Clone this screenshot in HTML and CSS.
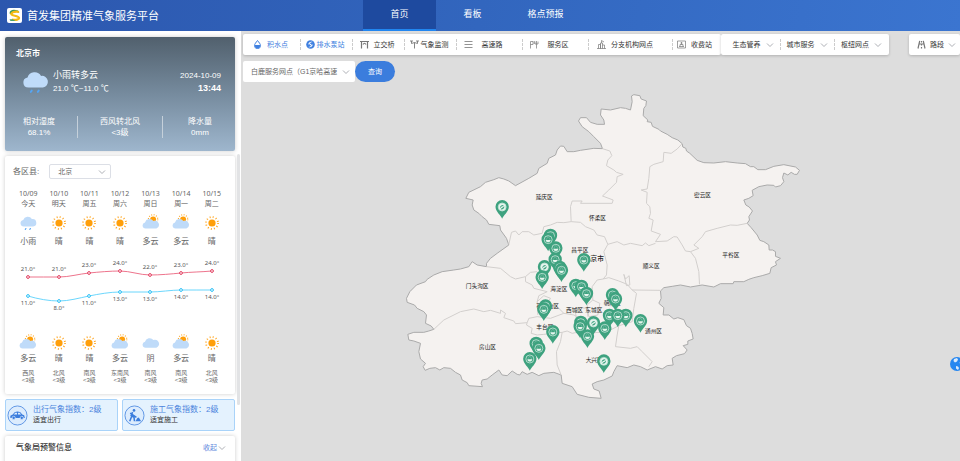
FILE: index.html
```html
<!DOCTYPE html>
<html lang="zh-CN">
<head>
<meta charset="utf-8">
<title>首发集团精准气象服务平台</title>
<link rel="stylesheet" href="styles.css">
</head>
<body>
<svg class="sprite" aria-hidden="true">
  <symbol id="rain" viewBox="0 0 30 30"><path d="M8 21a5.500 5.500 0 0 1-1-10.900A8 8 0 0 1 21.500 8.500a6.300 6.300 0 0 1 2 12.500z" fill="#bfdbf9"/><path d="M11.500 24.200l-1 1.400M19 24.200l-1 1.400" stroke="#55a5f3" stroke-width="2" stroke-linecap="round"/></symbol>
  <symbol id="sun" viewBox="0 0 30 30"><circle cx="15" cy="15" r="6" fill="#ff9f0a"/><circle cx="15" cy="15" r="10" fill="none" stroke="#ffa41c" stroke-width="3" stroke-dasharray="1.600 3.636"/></symbol>
  <symbol id="cloudy" viewBox="0 0 30 30"><circle cx="18.500" cy="9" r="5" fill="#ff9f0a"/><circle cx="18.500" cy="9" r="7.800" fill="none" stroke="#ffa41c" stroke-width="2" stroke-dasharray="1.500 2.584"/><path d="M6 24a5 5 0 0 1-1-9.900A8 8 0 0 1 19 11.500a6.500 6.500 0 0 1 5 12.500z" fill="#bfdbf9"/></symbol>
  <symbol id="overcast" viewBox="0 0 30 30"><path d="M6 23a5 5 0 0 1-1-9.900A8 8 0 0 1 19 10a6.500 6.500 0 0 1 5 13z" fill="#bfdbf9"/></symbol>
  <symbol id="down" viewBox="0 0 8 8"><path d="M1 2.500l3 3 3-3" fill="none" stroke="currentColor" stroke-width=".9"/></symbol>
</svg>

<header class="header">
  <div class="brand">
    <svg class="logo" viewBox="0 0 15 15"><rect width="15" height="15" rx="2" fill="#fff"/><path d="M2.500 5.500C2.500 2 6 1 11 2.500L12.500 5C9 3 6 4.500 4.500 6.500z" fill="#3a9d61"/><path d="M12 4C7 3 3.500 5 4.500 6.500c1 1.500 7 1 7.500 3.300.3 1.600-3 2.700-7 1.800" fill="none" stroke="#f5ba12" stroke-width="2.200"/><path d="M2.500 11.500c2-.6 4-.3 6 1.500H3.500z" fill="#4ba36a"/></svg>
    <span>首发集团精准气象服务平台</span>
  </div>
  <nav class="nav">
    <a class="active" href="#home">首页</a>
    <a href="#board">看板</a>
    <a href="#grid">格点预报</a>
  </nav>
</header>

<div class="body">
  <aside class="side">
    <section class="card now">
      <h1>北京市</h1>
      <div class="now-main">
        <svg class="now-icon"><use href="#rain"/></svg>
        <div class="now-text"><b>小雨转多云</b><span>21.0 ℃~11.0 ℃</span></div>
        <div class="now-time"><span>2024-10-09</span><strong>13:44</strong></div>
      </div>
      <dl class="stats">
        <div><dt>相对湿度</dt><dd>68.1%</dd></div>
        <div><dt>西风转北风</dt><dd>&lt;3级</dd></div>
        <div><dt>降水量</dt><dd>0mm</dd></div>
      </dl>
    </section>

    <section class="card forecast">
      <div class="district">
        <label for="district">各区县:</label>
        <div class="pick">
          <select id="district"><option>北京</option></select>
          <svg class="chev"><use href="#down"/></svg>
        </div>
      </div>
      <div class="days">
        <div><span>10/09</span><span>今天</span><svg><use href="#rain"/></svg><em>小雨</em></div>
        <div><span>10/10</span><span>明天</span><svg><use href="#sun"/></svg><em>晴</em></div>
        <div><span>10/11</span><span>周五</span><svg><use href="#sun"/></svg><em>晴</em></div>
        <div><span>10/12</span><span>周六</span><svg><use href="#sun"/></svg><em>晴</em></div>
        <div><span>10/13</span><span>周日</span><svg><use href="#cloudy"/></svg><em>多云</em></div>
        <div><span>10/14</span><span>周一</span><svg><use href="#cloudy"/></svg><em>多云</em></div>
        <div><span>10/15</span><span>周二</span><svg><use href="#sun"/></svg><em>晴</em></div>
      </div>
      <svg class="chart" viewBox="0 0 214 87">
        <g fill="none" stroke-width=".8">
          <path stroke="#e8506e" d="M15 31C25 31 36 31 46 31S66 28 76 27 97 25 107 25 127 29 137 29 158 28 168 27 188 26 199 25"/>
          <path stroke="#45ccfb" d="M15 50C25 53 36 55 46 55S66 52 76 50 97 46 107 46 127 46 137 46 158 44 168 44 188 44 199 44"/>
        </g>
        <g fill="#fff" stroke="#e23b5d" stroke-width="1"><circle cx="15" cy="31" r="1.400"/><circle cx="46" cy="31" r="1.400"/><circle cx="76" cy="27" r="1.400"/><circle cx="107" cy="25" r="1.400"/><circle cx="137" cy="29" r="1.400"/><circle cx="168" cy="27" r="1.400"/><circle cx="199" cy="25" r="1.400"/></g>
        <g fill="#fff" stroke="#28bff6" stroke-width="1"><circle cx="15" cy="50" r="1.400"/><circle cx="46" cy="55" r="1.400"/><circle cx="76" cy="50" r="1.400"/><circle cx="107" cy="46" r="1.400"/><circle cx="137" cy="46" r="1.400"/><circle cx="168" cy="44" r="1.400"/><circle cx="199" cy="44" r="1.400"/></g>
        <g class="temps">
          <text x="15" y="25">21.0°</text><text x="46" y="25">21.0°</text><text x="76" y="21">23.0°</text><text x="107" y="19">24.0°</text><text x="137" y="23">22.0°</text><text x="168" y="21">23.0°</text><text x="199" y="19">24.0°</text>
          <text x="15" y="59">11.0°</text><text x="46" y="64">8.0°</text><text x="76" y="59">11.0°</text><text x="107" y="55">13.0°</text><text x="137" y="55">13.0°</text><text x="168" y="53">14.0°</text><text x="199" y="53">14.0°</text>
        </g>
      </svg>
      <div class="days night">
        <div><svg><use href="#cloudy"/></svg><em>多云</em><small>西风</small><small>&lt;3级</small></div>
        <div><svg><use href="#sun"/></svg><em>晴</em><small>北风</small><small>&lt;3级</small></div>
        <div><svg><use href="#sun"/></svg><em>晴</em><small>南风</small><small>&lt;3级</small></div>
        <div><svg><use href="#cloudy"/></svg><em>多云</em><small>东南风</small><small>&lt;3级</small></div>
        <div><svg><use href="#overcast"/></svg><em>阴</em><small>南风</small><small>&lt;3级</small></div>
        <div><svg><use href="#cloudy"/></svg><em>多云</em><small>南风</small><small>&lt;3级</small></div>
        <div><svg><use href="#sun"/></svg><em>晴</em><small>北风</small><small>&lt;3级</small></div>
      </div>
    </section>

    <div class="indexes">
      <section>
        <svg viewBox="0 0 22 22"><circle cx="11" cy="11" r="10" fill="#dcecfd" stroke="#5c94e4"/><path d="M3.500 13.500v-2.300l2.500-1.200 2-2.500q3-1.500 6 0l2 2.500 2 .8.700 2.700z" fill="#3b7ddd"/><path d="M7 10l1.700-1.900h1.800V10zM11.500 8.100h1.700L14.800 10h-3.300z" fill="#dcecfd"/><circle cx="7" cy="13.500" r="1.700" fill="#3b7ddd" stroke="#dcecfd" stroke-width=".7"/><circle cx="15.500" cy="13.500" r="1.700" fill="#3b7ddd" stroke="#dcecfd" stroke-width=".7"/></svg>
        <div><b>出行气象指数：2级</b><span>适宜出行</span></div>
      </section>
      <section>
        <svg viewBox="0 0 22 22"><circle cx="11" cy="11" r="10" fill="#dcecfd" stroke="#5c94e4"/><circle cx="10.500" cy="5.700" r="1.400" fill="#3b7ddd"/><path d="M9 7.500L7.500 11l3 2 .5 4M8 12l-2 5M6.500 8.500L13 13" fill="none" stroke="#3b7ddd" stroke-width="1.600"/><path d="M12 17l2-3.500 1.500-.5L18 17z" fill="#3b7ddd"/></svg>
        <div><b>施工气象指数：2级</b><span>适宜施工</span></div>
      </section>
    </div>

    <section class="card alerts">
      <h2>气象局预警信息</h2>
      <button type="button">收起<svg class="chev"><use href="#down"/></svg></button>
    </section>
    <div class="scroll"></div>
  </aside>

  <main class="main">
    <svg class="map" viewBox="0 0 720 430" preserveAspectRatio="xMidYMin slice">
      <defs>
        <g id="pin"><path d="M0 35C-3 25-20 14-20-1A20 20 0 0 1 20-1C20 14 3 25 0 35z" fill="#3ea27f"/><circle r="12" fill="none" stroke="#e5f5ee" stroke-width="2"/></g>
        <g id="drop"><use href="#pin"/><path d="M0-9C3-5 6-1 6 2A6 6 0 0 1-6 2C-6-1-3-5 0-9z" fill="#3ea27f" stroke="#b9decf" stroke-width="1"/><path d="M-7 1H7C7 10-7 10-7 1z" fill="#e5f5ee"/></g>
        <g id="pump"><use href="#pin"/><circle r="11" fill="#e5f5ee"/><path d="M-6 4C-8-3-2-7 5-6L1-2-3-1zM6-3C8 4 2 8-5 7L-1 3 3 1z" fill="#3ea27f"/></g>
      </defs>
      <g transform="translate(160 54) scale(.33333)">
        <path class="land" d="M700 29L718 32 722 42 738 48 736 62 730 70 728 92 742 105 740 110 752 112 756 124 775 133 780 138 800 148 815 158 832 165 845 176 847 186 856 190 858 198 868 205 890 226 910 233 940 234 975 230 1010 234 1035 236 1050 245 1060 245 1072 254 1095 254 1120 244 1150 239 1185 246 1197 256 1190 268 1182 268 1172 262 1162 270 1150 264 1146 278 1150 290 1140 302 1125 306 1120 301 1100 300 1075 305 1055 316 1058 332 1045 340 1030 345 1036 360 1046 366 1056 378 1045 395 1047 405 1040 415 1052 428 1070 450 1078 466 1090 470 1105 480 1106 495 1116 495 1125 500 1125 514 1140 520 1125 530 1128 540 1112 548 1108 565 1085 572 1060 578 1045 583 1030 590 1000 590 998 596 960 596 940 606 905 600 870 606 840 600 815 604 790 608 780 618 782 640 775 655 790 668 788 690 805 690 820 702 832 698 850 704 858 722 870 730 875 745 878 762 862 768 862 778 848 782 860 795 852 806 828 812 815 820 818 840 800 842 785 852 765 845 740 855 720 845 700 840 680 848 650 842 640 860 635 873 610 885 590 890 575 897 580 912 596 918 602 940 565 937 530 928 515 905 485 895 482 870 460 862 430 865 415 872 395 862 380 868 365 860 358 870 350 868 335 858 320 872 305 870 295 855 275 870 260 882 245 885 242 895 246 905 205 902 200 893 185 885 180 870 165 862 150 850 130 848 118 855 105 848 88 850 74 856 68 845 75 835 60 822 55 800 60 775 40 768 25 765 22 748 40 742 70 742 85 738 100 733 92 723 75 715 78 690 70 680 50 670 42 660 20 652 18 640 28 620 48 600 75 590 80 583 100 570 125 560 160 555 180 552 205 545 215 530 230 540 258 545 258 535 270 520 290 505 325 480 318 460 300 435 298 422 265 418 258 405 245 395 235 385 220 375 215 360 218 345 196 340 205 322 240 305 255 292 280 284 295 278 310 282 325 288 345 302 385 280 410 265 415 250 440 235 445 220 465 210 470 195 480 183 490 184 500 200 520 200 540 196 580 190 606 191 600 175 580 155 565 140 545 125 534 108 540 98 558 98 570 112 590 118 612 118 610 105 600 90 602 72 630 75 660 68 675 70 690 75 695 50 693 33z"/>
        <path class="border" d="M606 191L628 198 634 212 622 225 618 242 640 255 648 262 668 268 650 275 648 292 625 315 606 333 638 345 635 355 540 355 545 348 515 348 510 365 512 410 490 413 470 412 450 420 430 425 425 445 400 450 385 440 365 440 355 450 345 438 333 442 325 478M512 410L540 412 555 425 580 435 590 450 612 455 622 478 610 500 620 540 618 570 608 582M622 478L650 470 670 480 690 475 725 482 735 474 745 482 765 475M845 176L830 192 812 205 790 202 788 230 760 238 748 245 745 280 740 312 722 315 740 322 738 355 748 365 750 385 745 400 758 405 752 438 780 448 765 470 800 468 820 455 830 456 845 480 855 498 870 500 895 490 880 480 905 455 915 440 950 430 990 420 1010 421 1040 415M870 500L885 520 895 560 897 598M608 582L625 578 655 588 680 598 695 615 780 616M670 568L675 582 686 572 688 600 678 602 670 568M695 615L708 625 700 670 695 710 680 715 655 722 650 750 645 785 690 790 710 785 725 800 755 830 745 845M608 582L590 585 575 605 577 645 598 655 592 690 565 695 560 670 540 668 525 680 528 710M577 645L560 660 562 695M258 545L300 550 330 575 345 582 375 575 390 562 410 560M375 575L375 590 395 600 400 610 440 620 415 632 410 650 430 632 450 640 440 655 450 660 470 665 490 685M100 733L130 705 180 680 220 672 250 680 270 676 300 685 300 675 315 685 310 698 340 708 345 716 380 713 385 700 410 695 450 700 490 685 520 690 540 700M380 713L378 720 395 730 392 745 410 750 430 748 485 742 480 770 468 800 470 840 482 870M485 742L500 738 515 745 540 740 560 745 620 740 655 722M410 650L412 690"/>
        <g class="places">
          <text x="431" y="343">延庆区</text><text x="591" y="404">怀柔区</text><text x="906" y="335">密云区</text><text x="538" y="500">昌平区</text><text x="991" y="515">平谷区</text><text x="752" y="548">顺义区</text><text x="230" y="609">门头沟区</text><text x="475" y="617">海淀区</text><text x="441" y="670">石景山区</text><text x="522" y="682">西城区</text><text x="580" y="682">东城区</text><text x="635" y="660">朝阳区</text><text x="433" y="731">丰台区</text><text x="261" y="792">房山区</text><text x="759" y="745">通州区</text><text x="581" y="832">大兴区</text>
          <text class="city" x="580" y="528">北京市</text>
        </g>
        <use href="#pump" x="305" y="366"/><use href="#drop" x="450" y="452"/><use href="#drop" x="443" y="464"/><use href="#drop" x="466" y="490"/><use href="#drop" x="464" y="524"/><use href="#drop" x="478" y="548"/><use href="#drop" x="483" y="556"/><use href="#pump" x="432" y="546"/><use href="#drop" x="425" y="577"/><use href="#drop" x="550" y="525"/><use href="#drop" x="526" y="602"/><use href="#drop" x="543" y="605"/><use href="#drop" x="558" y="626"/><use href="#drop" x="636" y="630"/><use href="#drop" x="645" y="642"/><use href="#pump" x="435" y="664"/><use href="#drop" x="430" y="673"/><use href="#drop" x="457" y="741"/><use href="#drop" x="407" y="776"/><use href="#drop" x="415" y="790"/><use href="#drop" x="388" y="822"/><use href="#drop" x="541" y="713"/><use href="#drop" x="539" y="725"/><use href="#pump" x="579" y="714"/><use href="#drop" x="561" y="754"/><use href="#drop" x="613" y="730"/><use href="#drop" x="627" y="692"/><use href="#drop" x="676" y="692"/><use href="#drop" x="652" y="692"/><use href="#drop" x="720" y="708"/><use href="#pump" x="610" y="829"/>
      </g>
    </svg>

    <div class="toolbar">
      <div class="group layers">
        <button type="button" class="on"><svg viewBox="0 0 9 9"><path d="M4.500.5C6 2.500 7.500 4 7.500 5.600a3 3 0 0 1-6 0C1.500 4 3 2.500 4.500.5z" fill="none" stroke="currentColor"/><path d="M1.800 5h5.400c.2 4.500-5.600 4.500-5.400 0z" fill="currentColor"/></svg>积水点</button>
        <button type="button" class="on tight"><svg viewBox="0 0 9 9"><circle cx="4.500" cy="4.500" r="4.300" fill="currentColor"/><path d="M6.800 2C4.500 1.200 2.600 2 2.300 4.500L3.500 4.200C3.800 3 4.800 2.300 6.800 2zM2.200 7c2.300.8 4.200 0 4.500-2.500l-1.200.3C5.200 6 4.200 6.700 2.200 7z" fill="#fff"/><circle cx="4.500" cy="4.500" r=".8" fill="#fff"/></svg>排水泵站</button>
        <button type="button"><svg viewBox="0 0 9 9"><path d="M0 1.500h9M1.500 1.500v7M7.500 1.500v7M3 4.500Q4.500 2 6 4.500" fill="none" stroke="currentColor" stroke-width="1.200"/></svg>立交桥</button>
        <button type="button" class="tight"><svg viewBox="0 0 9 9"><path d="M0 1h3M1.500 1v2.500l3-1 3 1V1M6 1h3M4.500 2.500v6" fill="none" stroke="currentColor" stroke-width=".9"/></svg>气象监测</button>
        <button type="button" class="wide"><svg viewBox="0 0 9 9"><path d="M.5 1.500h8M.5 4.500h8M.5 7.500h8" stroke="currentColor" stroke-width=".8"/></svg>高速路</button>
        <button type="button" class="wide"><svg viewBox="0 0 9 9"><path d="M.5 8.500v-7H3v3H.5M5 1.500v2.500h3V1.500M6.500 1v7.500M4.200 1v3" fill="none" stroke="currentColor" stroke-width=".7"/></svg>服务区</button>
        <button type="button" class="widest"><svg viewBox="0 0 9 9"><path d="M0 8.500h9M1.500 8.500v-4h2v4M3.500 8.500V3h2v5.500M5.500 5h2v3.500M4.500 3V.5L7 2" fill="none" stroke="currentColor" stroke-width=".7"/></svg>分支机构网点</button>
        <button type="button"><svg viewBox="0 0 9 9"><path d="M.5 1h8v7h-8zM2 6.500h5M3 6.500V4.500h3v2M4.500 2v2.500M3.500 3h2" fill="none" stroke="currentColor" stroke-width=".7"/></svg>收费站</button>
      </div>
      <div class="group menus">
        <button type="button">生态管养<svg class="chev"><use href="#down"/></svg></button>
        <button type="button">城市服务<svg class="chev"><use href="#down"/></svg></button>
        <button type="button">枢纽网点<svg class="chev"><use href="#down"/></svg></button>
      </div>
      <div class="group road">
        <button type="button"><svg viewBox="0 0 9 9"><path d="M2.700.8L1 8.500M6.300.8L8 8.500M4.500 1v1.500M4.500 4v1.500M4.500 7v1.500M2 4h5" fill="none" stroke="currentColor" stroke-width="1.200"/></svg>路段<svg class="chev"><use href="#down"/></svg></button>
      </div>
    </div>

    <form class="search">
      <div class="pick">
        <select aria-label="服务网点"><option>白鹿服务网点（G1京哈高速</option></select>
        <svg class="chev"><use href="#down"/></svg>
      </div>
      <button type="button">查询</button>
    </form>

    <button class="globe" type="button" aria-label="地图">
      <svg viewBox="0 0 14 14"><circle cx="7" cy="7" r="7" fill="#2687f0"/><path d="M4 2l3-1 1 1.500-1 2-2 1L3.500 4zM9.500 5.500L12 4l1.500 3L11 9zM6 9l2 .5 1 1.500-1 2-2-1.500z" fill="#dceafb"/></svg>
    </button>
  </main>
</div>
</body>
</html>
```
FILE: styles.css
```css
* { box-sizing: border-box; margin: 0; padding: 0; }
html, body { height: 100%; }
body {
  display: flex;
  flex-direction: column;
  overflow: hidden;
  font: 8px/10px "Liberation Sans", "Noto Sans CJK SC", sans-serif;
  color: #333;
  background: #fff;
}
button, select { font: inherit; color: inherit; border: 0; background: none; }
svg { display: block; flex: none; }
em, dt { font-style: normal; }
.sprite { position: absolute; width: 0; height: 0; }
.chev { width: 8px; height: 8px; color: #a3a6ad; }

.header {
  display: flex;
  flex: none;
  height: 31px;
  color: #fff;
  background: linear-gradient(100deg, #2c57ae, #3266be 50%, #3b75d0);
}
.brand { display: flex; align-items: center; gap: 5px; width: 363px; padding-left: 7px; font-size: 11px; }
.logo { width: 15px; height: 15px; }
.nav { display: flex; }
.nav a {
  width: 73px;
  padding-top: 1px;
  color: #fff;
  font-size: 9px;
  line-height: 26px;
  text-align: center;
  text-decoration: none;
  border-bottom: 2px solid transparent;
}
.nav .active { background: #1e4a9f; border-color: #2186f0; }

.body { display: flex; flex: 1; min-height: 0; }
.side {
  position: relative;
  display: flex;
  flex-direction: column;
  flex: none;
  gap: 5px;
  width: 241px;
  padding: 6px 6px 0 5px;
  overflow: hidden;
}
.side > * { flex: none; }
.card { border-radius: 2px; background: #fff; box-shadow: 0 0 4px #0003; }
.scroll { position: absolute; top: 123px; right: 1px; width: 3px; height: 251px; background: #e2e3e5; border-radius: 2px; }

.now { padding: 11px 14px 13px 11px; color: #fff; background: linear-gradient(#51606d, #768b9e 50%, #9eb6cd); }
.now h1 { font-size: 8px; line-height: 12px; }
.now-main { display: flex; align-items: center; gap: 3px; margin-top: 8px; padding-left: 4px; line-height: 13px; }
.now-icon { width: 30px; height: 28px; }
.now-text, .now-time { display: flex; flex-direction: column; }
.now-text b { font-size: 9px; font-weight: 400; }
.now-time { margin-left: auto; text-align: right; }
.now-time strong { font-size: 9px; }
.stats { display: grid; grid-template-columns: 61px 1fr 59px; margin-top: 20px; text-align: center; line-height: 11px; }
.stats div:first-child { padding-right: 15px; }
.stats div:last-child { padding-left: 16px; }
.stats div + div { border-left: 1px solid #c5d0da; }

.forecast { padding: 8px 8px 10px; color: #666; }
.district { display: flex; align-items: center; gap: 10px; }
.pick { position: relative; }
.pick select { appearance: none; width: 100%; outline: 0; }
.pick .chev { position: absolute; right: 5px; top: 50%; margin-top: -4px; }
.district .pick { width: 62px; }
.district select { height: 15px; padding-left: 8px; font-size: 7px; border: 1px solid #dcdfe6; border-radius: 2px; }
.days { display: grid; grid-template-columns: repeat(7, 1fr); margin-top: 10px; text-align: center; font-family: "Noto Sans", "Noto Sans CJK SC", sans-serif; }
.days div { display: flex; flex-direction: column; align-items: center; }
.days span { font-size: 7px; }
.days svg { width: 18px; height: 20px; margin-top: 4px; }
.days em { margin-top: 3px; }
.chart { width: 100%; }
.temps { font: 6px "Noto Sans", sans-serif; fill: #555; text-anchor: middle; }
.days.night { margin-top: 0; }
.night svg, .night em { margin-top: 0; }
.night em { margin-bottom: 7px; }
.night small { font: 6px/7px "Liberation Sans", "Noto Sans CJK SC", sans-serif; white-space: nowrap; }

.indexes { display: grid; grid-template-columns: 1fr 1fr; gap: 4px; }
.indexes section { display: flex; align-items: center; gap: 5px; height: 32px; padding-left: 1px; border: 1px solid #a9d3f9; border-radius: 2px; background: #e4f2fe; white-space: nowrap; }
.indexes svg { width: 21px; height: 21px; }
.indexes div { display: flex; flex-direction: column; }
.indexes b { color: #4c84dd; font-weight: 400; }
.indexes span { font-size: 7px; }
.alerts { display: flex; justify-content: space-between; height: 40px; padding: 7px 9px 0 11px; }
.alerts h2 { font-size: 8px; font-weight: 500; line-height: 10px; }
.alerts button { display: flex; align-items: center; height: 10px; gap: 1px; color: #5b87dc; font-size: 7px; }

.main { position: relative; flex: 1; min-width: 0; overflow: hidden; padding: 3px 0 0 2px; background: #ddd; }
.map { position: absolute; inset: 0; width: 100%; height: 100%; }
.land { fill: #f5f2f0; stroke: #aaa; stroke-width: 3; stroke-linejoin: round; }
.border { fill: none; stroke: #d2cfcd; stroke-width: 3; stroke-linejoin: round; }
.places { font: 17px "Noto Sans CJK SC", sans-serif; fill: #222; text-anchor: middle; }
.places .city { font-size: 20px; font-weight: 500; }

.toolbar { position: relative; display: flex; height: 21px; font-size: 7px; }
.group { display: flex; background: #fff; border-radius: 2px; box-shadow: 0 1px 3px #0003; }
.group button { position: relative; display: flex; align-items: center; justify-content: center; gap: 5px; white-space: nowrap; }
.group button + button::before { content: ""; position: absolute; left: 0; top: 5px; bottom: 5px; border-left: 1px dashed #ccc; }
.group svg:not(.chev) { width: 9px; height: 9px; color: #777; }
.layers button { width: 52px; padding-right: 2px; }
.layers button:first-child { width: 57px; }
.layers .tight { gap: 2px; }
.layers .wide { width: 66px; gap: 9px; padding-right: 12px; }
.layers .widest { width: 84px; padding-right: 10px; }
.layers button:last-child { width: 49px; padding-right: 4px; }
.layers .on, .group .on svg:not(.chev) { color: #4080e0; }
.menus { padding-left: 5px; }
.menus button { width: 54px; }
.menus button:last-child { width: 55px; }
.road { flex: 1; margin-left: 20px; padding-left: 8px; }
.road button { gap: 4px; }

.search { position: relative; display: flex; margin-top: 6px; font-size: 7px; }
.search .pick { width: 112px; }
.search select { height: 21px; padding-left: 8px; color: #666; background: #fff; border-radius: 2px; }
.search button { width: 40px; height: 21px; color: #fff; background: #3b7ddd; border-radius: 11px; }
.globe { position: absolute; right: -4px; top: 326px; width: 14px; height: 14px; }
```
